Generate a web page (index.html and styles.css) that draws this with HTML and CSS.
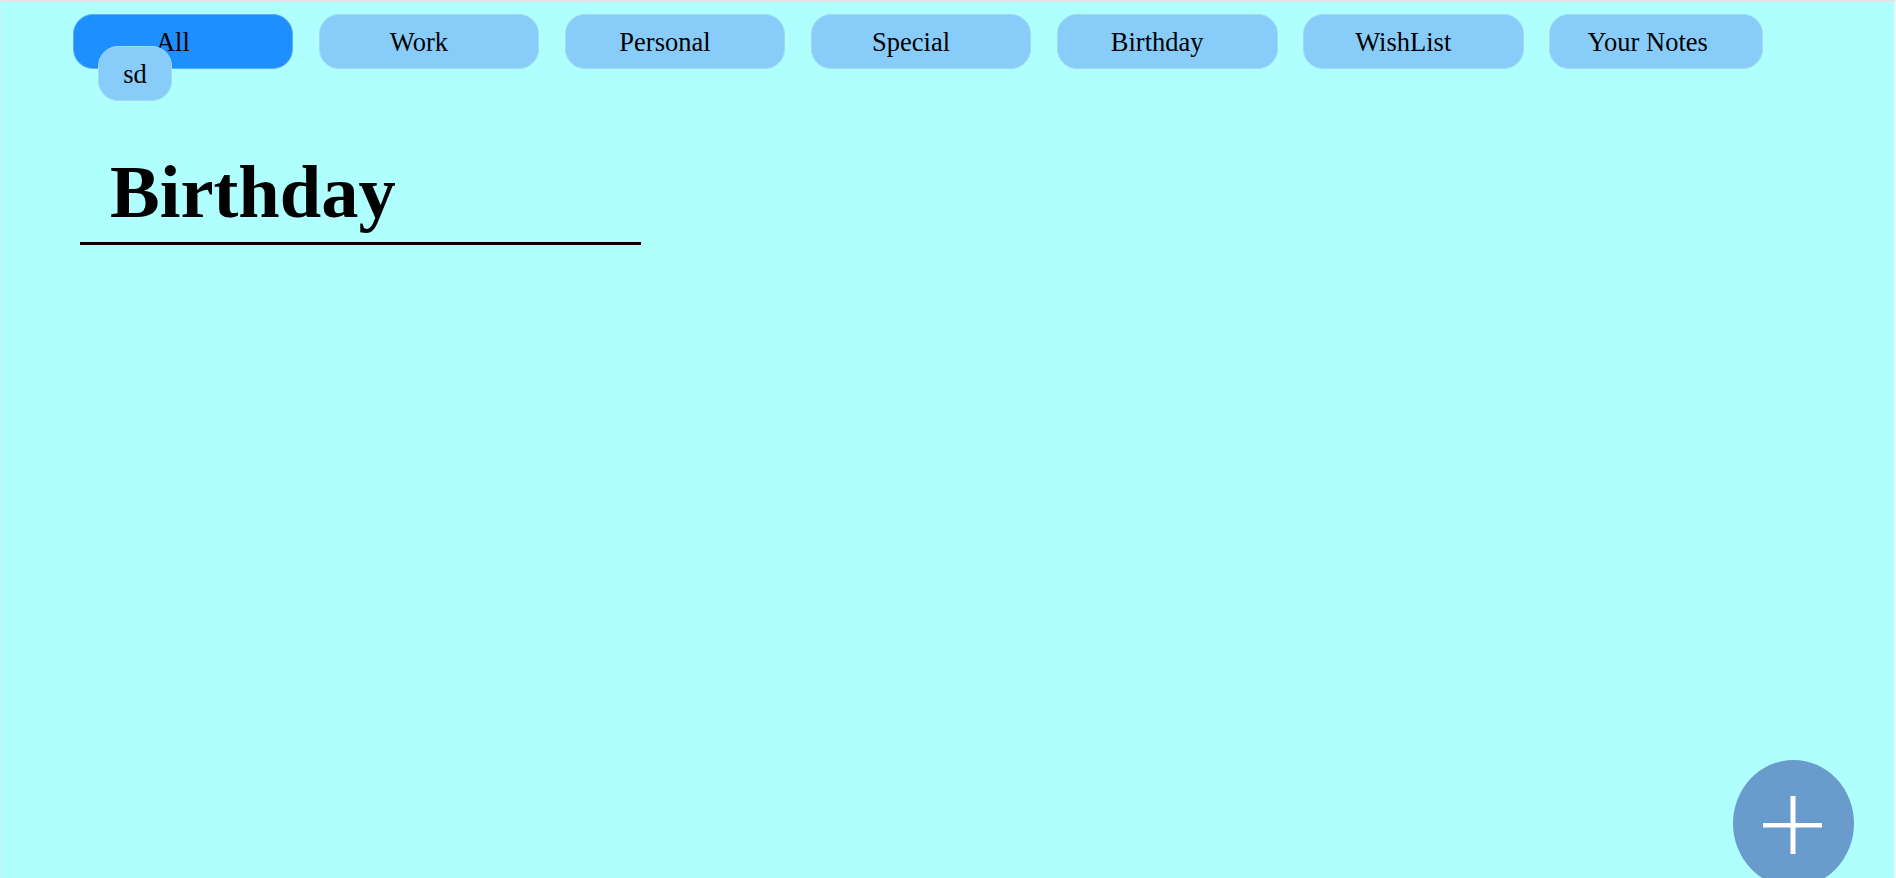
FILE: index.html
```html
<!DOCTYPE html>
<html>
<head>
<meta charset="utf-8">
<link rel="stylesheet" href="styles.css">
</head>
<body>
<div class="page">
  <nav class="tabs">
    <div class="tab-wrap">
      <button class="tab active">All</button>
      <div class="badge">sd</div>
    </div>
    <button class="tab">Work</button>
    <button class="tab">Personal</button>
    <button class="tab">Special</button>
    <button class="tab">Birthday</button>
    <button class="tab">WishList</button>
    <button class="tab narrow">Your Notes</button>
  </nav>
  <div class="heading">
    <h1 class="title">Birthday</h1>
  </div>
</div>
<button class="fab" aria-label="Add note">
  <svg width="60" height="60" viewBox="0 0 60 60">
    <rect x="0" y="27" width="59" height="4.5" fill="#ffffff"/>
    <rect x="27.5" y="0" width="5" height="58" fill="#ffffff"/>
  </svg>
</button>
</body>
</html>
```
FILE: styles.css
```css
html, body {
  margin: 0;
  padding: 0;
  height: 100%;
}
body {
  background: #b0ffff;
  font-family: "Liberation Serif", "Times New Roman", serif;
  color: #000;
  overflow: hidden;
}
.page {
  height: 100%;
  box-sizing: border-box;
  border-top: 2px solid #e4e4e4;
  border-right: 2px solid #e8fdfd;
  border-left: 1px solid #c6f4f4;
}
.tabs {
  display: flex;
  gap: 25.4px;
  padding: 12px 0 0 71.5px;
}
.tab-wrap {
  position: relative;
  display: flex;
}
.tab {
  width: 220.7px;
  height: 55px;
  box-sizing: border-box;
  border: 1px solid #a3d7f2;
  border-radius: 20px;
  background: #88cdf9;
  font-family: "Liberation Serif", "Times New Roman", serif;
  font-size: 26.5px;
  color: #000;
  padding: 2px 20px 0 0;
  display: flex;
  align-items: center;
  justify-content: center;
  cursor: pointer;
}
.tab.active {
  background: #1e8fff;
  border-color: #5aaef5;
}
.tab.narrow {
  width: 214.5px;
  padding-right: 17px;
}
.badge {
  position: absolute;
  left: 25.5px;
  top: 32px;
  width: 74px;
  height: 55px;
  box-sizing: border-box;
  border: 1px solid #a3d7f2;
  border-radius: 20px;
  background: #88cdf9;
  font-size: 26.5px;
  padding-top: 2px;
  display: flex;
  align-items: center;
  justify-content: center;
}
.heading {
  margin: 86px 0 0 79px;
  width: 561px;
  padding: 0 0 12px 30px;
  box-sizing: border-box;
  border-bottom: 3px solid #000;
}
.title {
  margin: 0;
  font-size: 74.5px;
  line-height: 1;
  font-weight: bold;
}
.fab {
  position: fixed;
  left: 1733px;
  top: 760px;
  width: 121px;
  height: 127px;
  border: none;
  border-radius: 50%;
  background: #699bcd;
  padding: 0;
  display: flex;
  align-items: center;
  justify-content: center;
  cursor: pointer;
}
.fab svg {
  display: block;
  margin: 4px 2px 0 0;
}
```
